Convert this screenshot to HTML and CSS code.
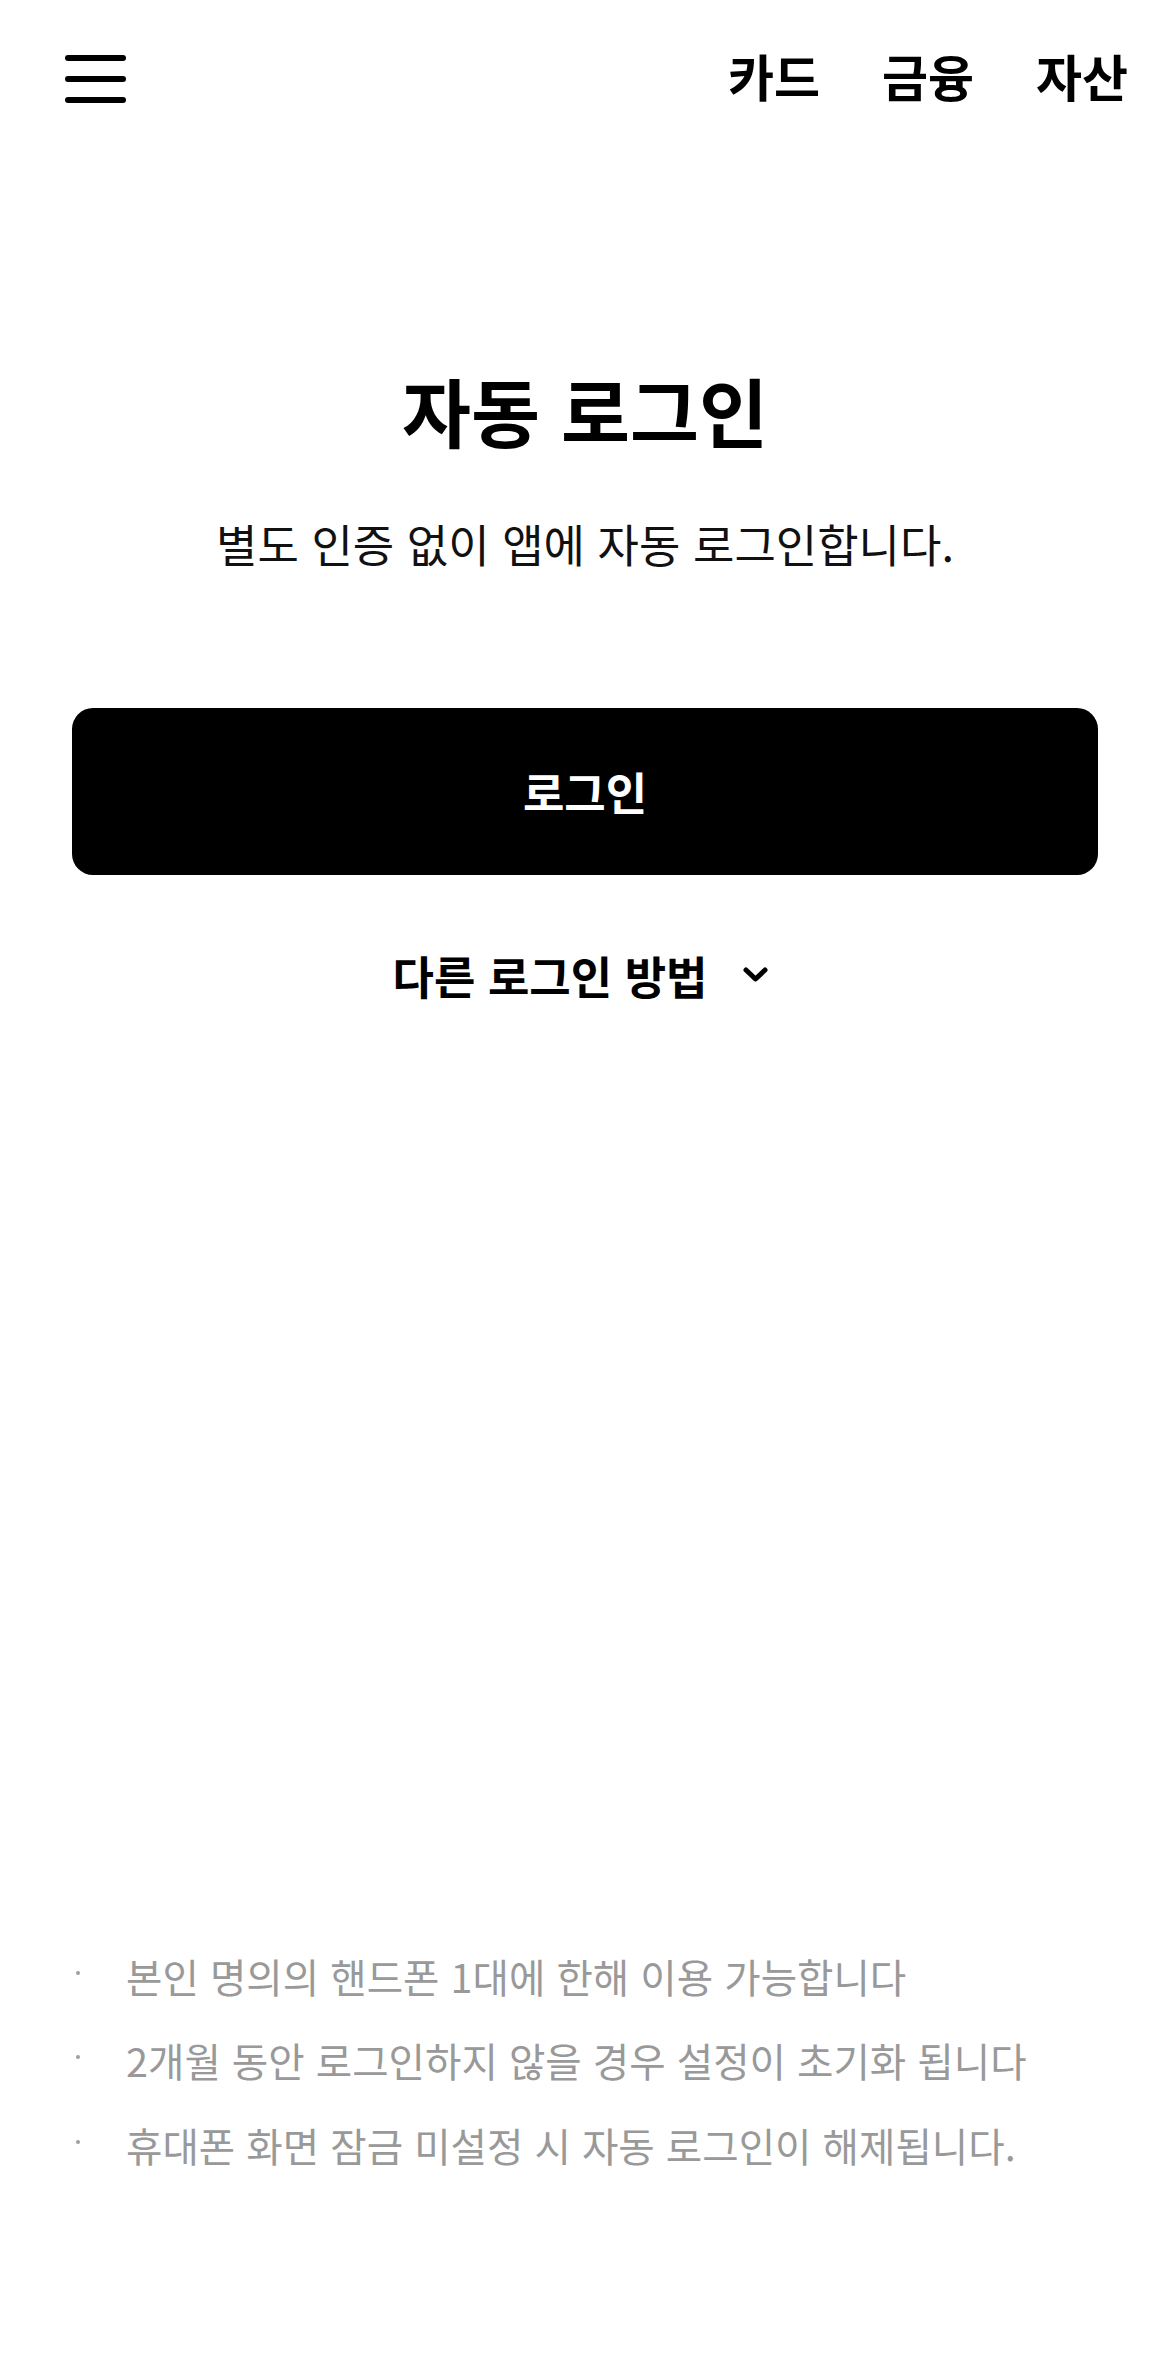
FILE: index.html
```html
<!DOCTYPE html>
<html lang="ko">
<head>
<meta charset="utf-8">
<title>자동 로그인</title>
<link rel="stylesheet" href="styles.css">
</head>
<body>
<div class="page">
  <header class="topbar">
    <button class="menu" aria-label="메뉴">
      <svg width="70" height="56" viewBox="0 0 70 56">
        <g stroke="#000" stroke-width="6" stroke-linecap="round">
          <line x1="6" y1="7" x2="61" y2="7"/>
          <line x1="6" y1="28" x2="61" y2="28"/>
          <line x1="6" y1="49" x2="61" y2="49"/>
        </g>
      </svg>
    </button>
    <nav class="nav">
      <a class="nav-item">카드</a>
      <a class="nav-item">금융</a>
      <a class="nav-item">자산</a>
    </nav>
  </header>

  <main class="content">
    <h1 class="title">자동 로그인</h1>
    <p class="subtitle">별도 인증 없이 앱에 자동 로그인합니다.</p>
    <button class="login-btn">로그인</button>
    <div class="other">
      <span class="other-text">다른 로그인 방법</span>
      <svg class="chev" width="25" height="15" viewBox="0 0 25 15">
        <polyline points="3,3 12.5,12 22,3" fill="none" stroke="#000" stroke-width="5" stroke-linecap="round" stroke-linejoin="round"/>
      </svg>
    </div>
  </main>

  <ul class="notes">
    <li class="note"><span class="dot"></span><span class="note-text">본인 명의의 핸드폰 1대에 한해 이용 가능합니다</span></li>
    <li class="note"><span class="dot"></span><span class="note-text">2개월 동안 로그인하지 않을 경우 설정이 초기화 됩니다</span></li>
    <li class="note"><span class="dot"></span><span class="note-text">휴대폰 화면 잠금 미설정 시 자동 로그인이 해제됩니다.</span></li>
  </ul>
</div>
</body>
</html>
```

FILE: styles.css
```css
* { box-sizing: border-box; }
html, body {
  margin: 0;
  padding: 0;
  background: #fff;
}
body {
  font-family: "Noto Sans CJK KR", "Noto Sans", sans-serif;
  color: #000;
}
.page {
  min-height: 2374px;
  display: flex;
  flex-direction: column;
}
.topbar {
  height: 158px;
  display: flex;
  align-items: center;
  justify-content: space-between;
  padding: 0 42px 0 62px;
}
.menu {
  border: 0;
  background: none;
  padding: 0;
  display: flex;
}
.nav {
  display: flex;
  gap: 62px;
  margin-top: -9px;
}
.nav-item {
  font-size: 50px;
  font-weight: 700;
  line-height: 60px;
  color: #000;
}
.content {
  display: flex;
  flex-direction: column;
  align-items: center;
  padding: 204px 72px 0;
}
.title {
  margin: 0;
  font-size: 75px;
  font-weight: 700;
  line-height: 96px;
}
.subtitle {
  margin: 56px 0 0;
  font-size: 45px;
  font-weight: 400;
  line-height: 60px;
  color: #111;
}
.login-btn {
  margin-top: 134px;
  width: 100%;
  height: 167px;
  border: 0;
  border-radius: 21px;
  background: #000;
  color: #fff;
  font-family: inherit;
  font-size: 45px;
  font-weight: 700;
}
.other {
  margin: 71px 10px 0 0;
  display: flex;
  align-items: center;
  gap: 35px;
  height: 60px;
}
.other-text {
  font-size: 45px;
  font-weight: 700;
  line-height: 60px;
}
.chev {
  margin-bottom: 4px;
}
.notes {
  list-style: none;
  margin: auto 0 0;
  padding: 0 40px 187px 76px;
}
.note {
  display: flex;
  align-items: center;
  height: 84.5px;
}
.dot {
  width: 4px;
  height: 4px;
  border-radius: 50%;
  background: #a0a0a0;
  margin-bottom: 6px;
  margin-right: 46px;
  flex: none;
}
.note-text {
  font-size: 39.6px;
  line-height: 56px;
  color: #999;
  white-space: nowrap;
}
```
